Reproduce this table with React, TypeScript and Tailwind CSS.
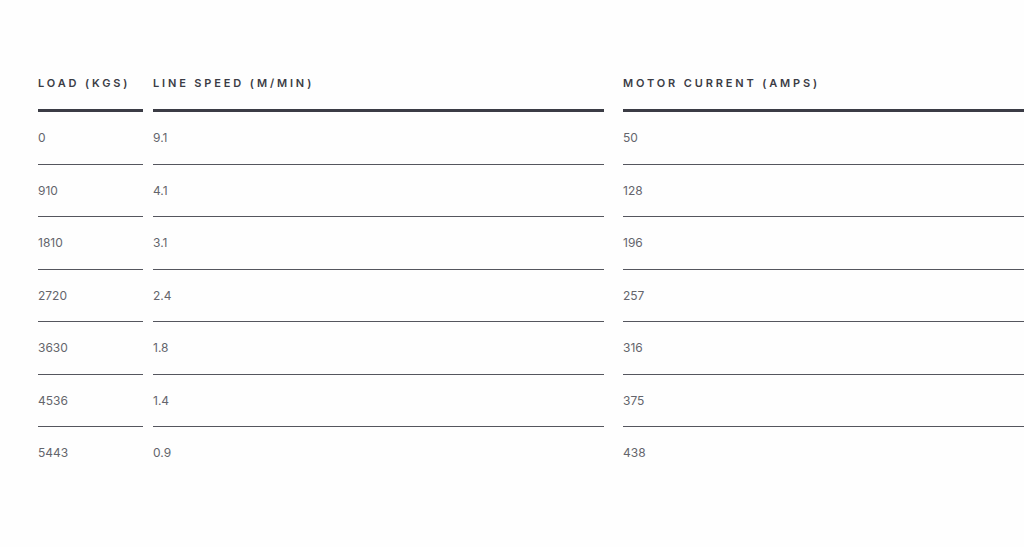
const rows = [
  ["0", "9.1", "50"],
  ["910", "4.1", "128"],
  ["1810", "3.1", "196"],
  ["2720", "2.4", "257"],
  ["3630", "1.8", "316"],
  ["4536", "1.4", "375"],
  ["5443", "0.9", "438"],
];

const headers = ["LOAD (KGS)", "LINE SPEED (M/MIN)", "MOTOR CURRENT (AMPS)"];
const widths = ["w-[105px] mr-[10px]", "w-[451px] mr-[19px]", "flex-1"];

export default function App() {
  return (
    <div className="h-[547px] w-[1024px] overflow-hidden bg-[#fefefe] font-['Inter','Liberation_Sans',sans-serif]">
      <div className="w-[1120px] pl-[38px] pt-[75px]">
        {/* header */}
        <div className="flex">
          {headers.map((h, i) => (
            <div
              key={h}
              className={`${widths[i]} h-[37px] border-b-[3px] border-[#3b3c45] text-[11px] leading-4 font-semibold tracking-[0.26em] text-[#3b3c45]`}
            >
              {h}
            </div>
          ))}
        </div>

        {rows.map((r, ri) => (
          <div key={ri} className="flex">
            {r.map((v, i) => (
              <div
                key={i}
                className={`${widths[i]} h-[52.5px] pt-[18px] text-[12px] leading-4 text-[#64656c] ${
                  ri < rows.length - 1 ? "border-b border-[#55565e]" : ""
                }`}
              >
                {v}
              </div>
            ))}
          </div>
        ))}
      </div>
    </div>
  );
}
